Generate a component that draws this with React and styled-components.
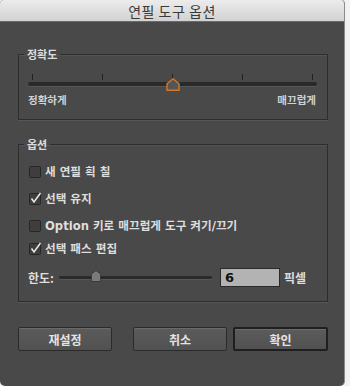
import React from 'react';
import styled, { createGlobalStyle } from 'styled-components';

const GlobalStyle = createGlobalStyle`
  html, body {
    margin: 0;
    padding: 0;
    background: #f2f2f2;
  }
  body {
    font-family: "DejaVu Sans", "Noto Sans CJK KR", sans-serif;
  }
`;

const Window = styled.div`
  width: 345px;
  height: 386px;
  box-sizing: border-box;
  background: #494949;
  border-right: 1px solid #8a8a8a;
  border-radius: 4px 4px 5px 5px;
  overflow: hidden;
  display: flex;
  flex-direction: column;
`;

const TitleBar = styled.div`
  height: 22px;
  flex: none;
  background: linear-gradient(#ececec, #d2d2d2);
  border-bottom: 1px solid #6a6a6a;
  box-sizing: border-box;
  display: flex;
  align-items: center;
  justify-content: center;
  font-family: "Noto Sans CJK KR", sans-serif;
  font-size: 14px;
  color: #3a3a3a;
  letter-spacing: 0.5px;
`;

const Body = styled.div`
  padding: 25px 16px 0 18px;
  display: flex;
  flex-direction: column;
`;

const Group = styled.fieldset`
  margin: ${p => p.$top || 0}px 0 0 0;
  padding: 0 10px ${p => p.$bottom}px 9px;
  border: 1px solid #2d2d2d;
  box-shadow: 0 1px 0 rgba(255, 255, 255, 0.08), inset 0 1px 0 rgba(255, 255, 255, 0.06);
  min-width: 0;
`;

const Legend = styled.legend`
  padding: 0 3px;
  margin-left: -4px;
  font-size: 11px;
  line-height: 14px;
  font-weight: bold;
  color: #dcdcdc;
  font-family: "Noto Sans CJK KR", sans-serif;
`;

const SliderArea = styled.div`
  padding-top: 13px;
`;

const TickRow = styled.div`
  height: 6px;
  padding: 0 4px;
  display: flex;
  justify-content: space-between;
`;

const Tick = styled.span`
  width: 1px;
  height: 6px;
  background: #222;
`;

const Track = styled.div`
  position: relative;
  margin-top: ${p => p.$mt ?? 2}px;
  height: ${p => p.$h || 4}px;
  background: #2a2a2a;
  border-radius: 2px;
  box-shadow: 0 1px 0 rgba(255, 255, 255, 0.08);
  flex: ${p => (p.$grow ? 1 : 'none')};
`;

const Thumb = styled.svg`
  position: absolute;
  left: ${p => p.$at}%;
  top: ${p => p.$top}px;
  transform: translateX(-50%);
`;

const Labels = styled.div`
  margin-top: 7px;
  display: flex;
  justify-content: space-between;
  padding-right: 1px;
  font-family: "Noto Sans CJK KR", sans-serif;
  font-size: 10.5px;
  line-height: 14px;
  font-weight: bold;
  color: #d2d2d2;
`;

const Row = styled.label`
  display: flex;
  align-items: center;
  height: 16px;
  margin-top: ${p => p.$gap}px;
  padding-left: 1px;
  gap: 3px;
  font-size: 11.6px;
  font-weight: bold;
  color: #dedede;
  white-space: nowrap;
`;

const LimitRow = styled.div`
  display: flex;
  align-items: center;
  height: 19px;
  margin-top: 12px;
  font-size: 12px;
  font-weight: bold;
  color: #dedede;
  font-family: "Noto Sans CJK KR", sans-serif;
`;

const LimitLabel = styled.span`
  width: 31px;
`;

const LimitSlider = styled.div`
  width: 153px;
  display: flex;
  align-items: center;
`;

const NumberBox = styled.div`
  margin-left: 8px;
  width: 60px;
  height: 19px;
  box-sizing: border-box;
  background: #b3b3b3;
  border: 1px solid #2a2a2a;
  padding-left: 4px;
  display: flex;
  align-items: center;
  font-family: "DejaVu Sans", sans-serif;
  font-size: 13px;
  font-weight: bold;
  color: #111;
`;

const Unit = styled.span`
  margin-left: 4px;
`;

const Buttons = styled.div`
  margin-top: 25px;
  display: flex;
  gap: 6px;
`;

const Button = styled.button`
  width: ${p => p.$w || 94}px;
  height: 24px;
  box-sizing: border-box;
  border: ${p => (p.$primary ? '2px solid #1f1f1f' : '1px solid #2b2b2b')};
  background: linear-gradient(#5b5b5b, #515151);
  box-shadow: inset 0 1px 0 rgba(255, 255, 255, 0.1);
  border-radius: 2px;
  color: #e4e4e4;
  font-family: "Noto Sans CJK KR", sans-serif;
  font-size: 12px;
  font-weight: bold;
  padding: 0;
`;

const Spacer = styled.div`
  flex: 1;
`;

function Check({ on }) {
  return (
    <svg width="13" height="14" viewBox="0 0 13 14">
      <rect x="0.5" y="2.5" width="11" height="11" rx="1" fill="#3e3e3e" stroke="#262626" />
      {on && (
        <polyline
          points="2.5,7.5 5,11 11.5,2"
          fill="none"
          stroke="#e8e8e8"
          strokeWidth="1.5"
        />
      )}
    </svg>
  );
}

export default function App() {
  return (
    <>
      <GlobalStyle />
      <Window>
        <TitleBar>연필 도구 옵션</TitleBar>
        <Body>
          <Group $bottom={12}>
            <Legend>정확도</Legend>
            <SliderArea>
              <TickRow>
                {[0, 1, 2, 3, 4].map(i => <Tick key={i} />)}
              </TickRow>
              <Track>
                <Thumb $at={50} $top={-4} width="14" height="13" viewBox="0 0 14 13">
                  <path d="M7 0.8 L13 5.8 L13 12.2 L1 12.2 L1 5.8 Z" fill="#555" stroke="#d3782a" strokeWidth="1.4" />
                </Thumb>
              </Track>
              <Labels>
                <span>정확하게</span>
                <span>매끄럽게</span>
              </Labels>
            </SliderArea>
          </Group>

          <Group $top={17} $bottom={14}>
            <Legend>옵션</Legend>
            <Row $gap={12}><Check />새 연필 획 칠</Row>
            <Row $gap={11}><Check on />선택 유지</Row>
            <Row $gap={11}><Check />Option 키로 매끄럽게 도구 켜기/끄기</Row>
            <Row $gap={7}><Check on />선택 패스 편집</Row>
            <LimitRow>
              <LimitLabel>한도:</LimitLabel>
              <LimitSlider>
                <Track $h={3} $mt={0} $grow>
                  <Thumb $at={24} $top={-6} width="10" height="12" viewBox="0 0 10 12">
                    <path d="M5 0.5 L9.5 4 L9.5 11.5 L0.5 11.5 L0.5 4 Z" fill="#7a7a7a" stroke="#333" strokeWidth="0.8" />
                  </Thumb>
                </Track>
              </LimitSlider>
              <NumberBox>6</NumberBox>
              <Unit>픽셀</Unit>
            </LimitRow>
          </Group>

          <Buttons>
            <Button>재설정</Button>
            <Spacer />
            <Button>취소</Button>
            <Button $primary $w={95}>확인</Button>
          </Buttons>
        </Body>
      </Window>
    </>
  );
}
